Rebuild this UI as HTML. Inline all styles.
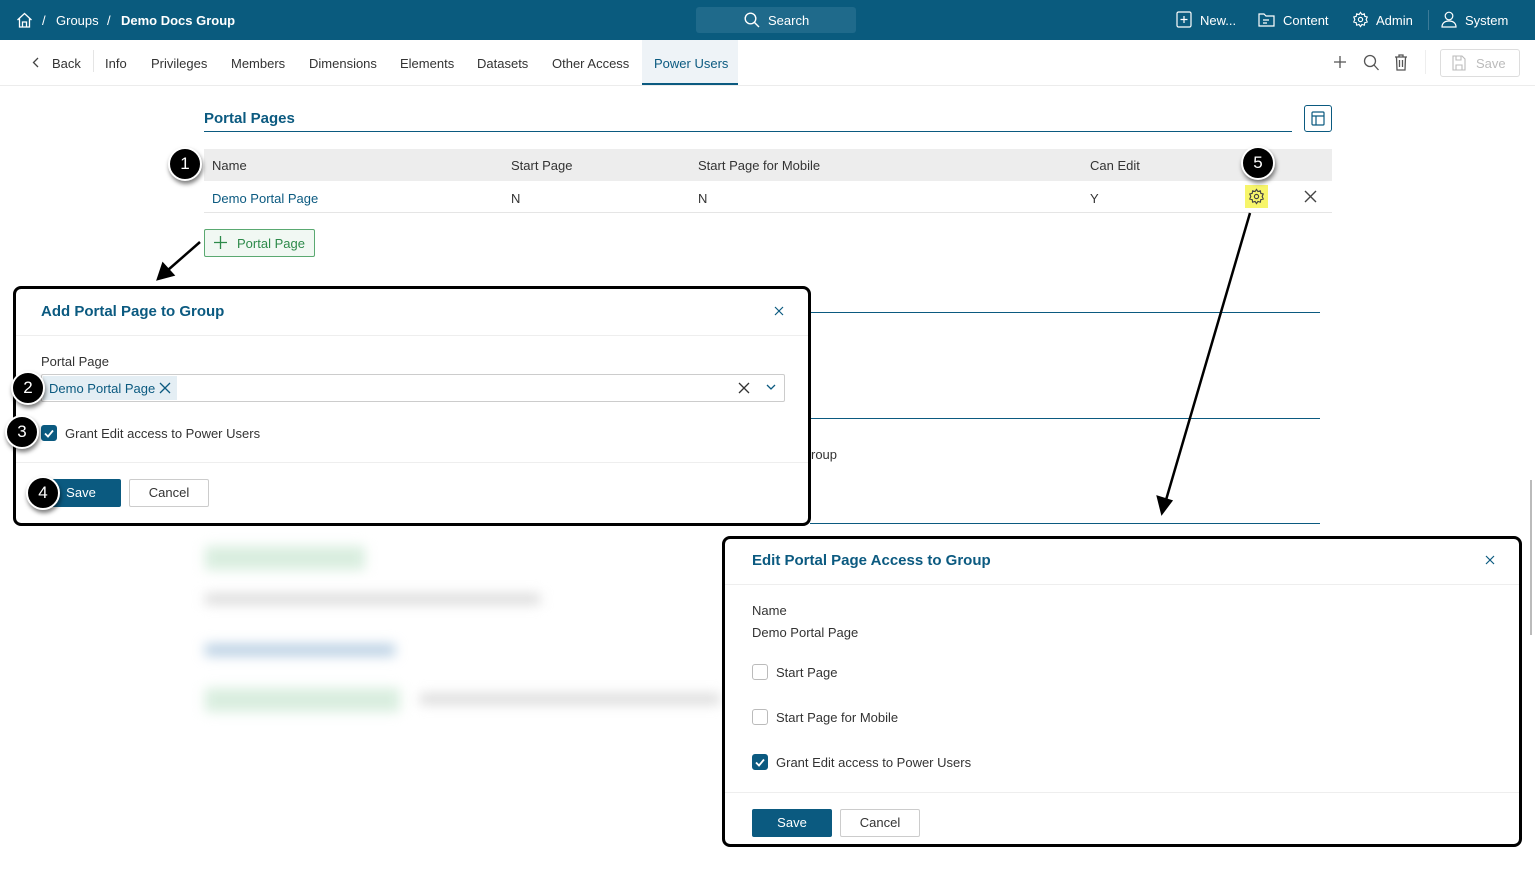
<!DOCTYPE html>
<html><head><meta charset="utf-8"><style>
*{box-sizing:border-box;margin:0;padding:0}
body{width:1535px;height:883px;position:relative;overflow:hidden;background:#fff;font-family:"Liberation Sans",sans-serif;font-size:13px;color:#333}
.a{position:absolute;white-space:nowrap}
.top{left:0;top:0;width:1535px;height:40px;background:#0a5b7e;color:#fff}
.blue{color:#0b5a80}
.badge{position:absolute;width:34px;height:34px;border-radius:50%;background:#000;border:2px solid #fff;box-shadow:1px 3px 4px rgba(0,0,0,.5);color:#fff;font-size:17px;text-align:center;line-height:30px}
.dlg{position:absolute;background:#fff;border:3px solid #000;border-radius:8px}
.cb{position:absolute;width:16px;height:16px;border:1px solid #bbb;border-radius:3px;background:#fff}
.cb.on{background:#0b5a80;border-color:#0b5a80}
.btn{position:absolute;height:28px;border-radius:2px;text-align:center;line-height:28px;font-size:13px}
.save{background:#0b5a80;color:#fff}
.cancel{background:#fff;border:1px solid #ccc;color:#333;line-height:26px}
.blur{position:absolute;filter:blur(6px)}
</style></head><body>
<div class="a top">
<svg class="a" style="left:16px;top:12px" width="17" height="16" viewBox="0 0 17 16" fill="none" stroke="#fff" stroke-width="1.3"><path d="M1.5 8L8.5 1.5 15.5 8M3.5 6.5V15h10V6.5M6.5 15v-5h4v5"/></svg>
<span class="a" style="left:42px;top:13px">/</span>
<span class="a" style="left:56px;top:13px">Groups</span>
<span class="a" style="left:107px;top:13px">/</span>
<span class="a" style="left:121px;top:13px;font-weight:bold">Demo Docs Group</span>
<div class="a" style="left:696px;top:7px;width:160px;height:26px;background:#1f6a8b;border-radius:3px"></div>
<svg class="a" style="left:744px;top:12px" width="16" height="16" viewBox="0 0 16 16" fill="none" stroke="#fff" stroke-width="1.4"><circle cx="6.5" cy="6.5" r="5.3"/><path d="M10.5 10.5L15 15"/></svg>
<span class="a" style="left:768px;top:13px">Search</span>
<svg class="a" style="left:1176px;top:11px" width="16" height="17" viewBox="0 0 16 17" fill="none" stroke="#fff" stroke-width="1.2"><rect x="1" y="1" width="14" height="15" rx="1.5"/><path d="M8 5v7M4.5 8.5h7"/></svg>
<span class="a" style="left:1200px;top:13px">New...</span>
<svg class="a" style="left:1258px;top:11px" width="17" height="17" viewBox="0 0 17 17" fill="none" stroke="#fff" stroke-width="1.2"><path d="M1 3h5l2 2h8v10H1z"/><path d="M5 9h6M5 12h4"/></svg>
<span class="a" style="left:1283px;top:13px">Content</span>
<svg class="a" style="left:1352px;top:11px" width="17" height="17" viewBox="0 0 24 24" fill="none" stroke="#fff" stroke-width="1.6"><circle cx="12" cy="12" r="3"/><path d="M12 2l2 3 3.5-1 .5 3.5 3.5 1-1.5 3.5 1.5 3.5-3.5 1-.5 3.5-3.5-1-2 3-2-3-3.5 1-.5-3.5-3.5-1L4 12 2.5 8.5 6 7.5 6.5 4 10 5z"/></svg>
<span class="a" style="left:1376px;top:13px">Admin</span>
<div class="a" style="left:1428px;top:10px;width:1px;height:20px;background:#3c7b98"></div>
<svg class="a" style="left:1441px;top:11px" width="16" height="17" viewBox="0 0 16 17" fill="none" stroke="#fff" stroke-width="1.2"><circle cx="8" cy="5" r="3.8"/><path d="M1 16c0-4 3-6 7-6s7 2 7 6z"/></svg>
<span class="a" style="left:1465px;top:13px">System</span>
</div>
<div class="a" style="left:0;top:85px;width:1535px;height:1px;background:#ececec"></div>
<div class="a" style="left:642px;top:40px;width:96px;height:45px;background:#eef3f7;border-bottom:2px solid #0b5a80"></div>
<svg class="a" style="left:32px;top:57px" width="7" height="11" fill="none" stroke="#444" stroke-width="1.3"><path d="M6 1L1.5 5.5 6 10"/></svg>
<span class="a" style="left:52px;top:56px">Back</span>
<div class="a" style="left:93px;top:50px;width:1px;height:22px;background:#e5e5e5"></div>
<span class="a" style="left:105px;top:56px">Info</span>
<span class="a" style="left:151px;top:56px">Privileges</span>
<span class="a" style="left:231px;top:56px">Members</span>
<span class="a" style="left:309px;top:56px">Dimensions</span>
<span class="a" style="left:400px;top:56px">Elements</span>
<span class="a" style="left:477px;top:56px">Datasets</span>
<span class="a" style="left:552px;top:56px">Other Access</span>
<span class="a blue" style="left:654px;top:56px">Power Users</span>
<svg class="a" style="left:1333px;top:55px" width="14" height="14" stroke="#555" stroke-width="1.3"><path d="M7 1v12M1 7h12"/></svg>
<svg class="a" style="left:1363px;top:54px" width="16" height="17" fill="none" stroke="#555" stroke-width="1.3"><circle cx="7" cy="7" r="5.5"/><path d="M11 11l4.5 5"/></svg>
<svg class="a" style="left:1394px;top:54px" width="14" height="17" fill="none" stroke="#555" stroke-width="1.3"><path d="M1 3h12M5 3V1h4v2M2.5 3l.5 13h8l.5-13M5.5 6v7M8.5 6v7"/></svg>
<div class="a" style="left:1425px;top:50px;width:1px;height:24px;background:#eee"></div>
<div class="a" style="left:1440px;top:49px;width:80px;height:28px;border:1px solid #ddd;border-radius:3px"></div>
<svg class="a" style="left:1452px;top:55px" width="14" height="16" fill="none" stroke="#bbb" stroke-width="1.1"><path d="M1 1h9l3 3v11H1z M4 1v4h5V1M4 15v-5h6v5"/></svg>
<span class="a" style="left:1476px;top:56px;color:#bbb">Save</span>
<span class="a blue" style="left:204px;top:110px;font-size:15px;font-weight:bold">Portal Pages</span>
<div class="a" style="left:204px;top:131px;width:1088px;height:1px;background:#0b5a80"></div>
<div class="a" style="left:1304px;top:105px;width:28px;height:27px;border:1px solid #0b5a80;border-radius:3px"></div>
<svg class="a" style="left:1311px;top:111px" width="14" height="15" fill="none" stroke="#0b5a80" stroke-width="1.2"><rect x="1" y="1" width="12" height="13" rx="1"/><path d="M1 5h12M5 5v9"/></svg>
<div class="a" style="left:204px;top:149px;width:1128px;height:32px;background:#ededed"></div>
<span class="a" style="left:212px;top:158px">Name</span>
<span class="a" style="left:511px;top:158px">Start Page</span>
<span class="a" style="left:698px;top:158px">Start Page for Mobile</span>
<span class="a" style="left:1090px;top:158px">Can Edit</span>
<div class="a" style="left:204px;top:212px;width:1128px;height:1px;background:#e5e5e5"></div>
<span class="a blue" style="left:212px;top:191px">Demo Portal Page</span>
<span class="a" style="left:511px;top:191px">N</span>
<span class="a" style="left:698px;top:191px">N</span>
<span class="a" style="left:1090px;top:191px">Y</span>
<div class="a" style="left:1245px;top:185px;width:23px;height:23px;background:#f7f56a"></div>
<svg class="a" style="left:1248px;top:188px" width="17" height="17" viewBox="0 0 24 24" fill="none" stroke="#444" stroke-width="1.6"><circle cx="12" cy="12" r="3"/><path d="M12 2l2 3 3.5-1 .5 3.5 3.5 1-1.5 3.5 1.5 3.5-3.5 1-.5 3.5-3.5-1-2 3-2-3-3.5 1-.5-3.5-3.5-1L4 12 2.5 8.5 6 7.5 6.5 4 10 5z"/></svg>
<svg class="a" style="left:1304px;top:190px" width="13" height="13" stroke="#444" stroke-width="1.4"><path d="M1 1l11 11M12 1L1 12"/></svg>
<div class="a" style="left:204px;top:229px;width:111px;height:28px;border:1px solid #5aa971;background:#f1f8f3;border-radius:2px"></div>
<svg class="a" style="left:214px;top:236px" width="13" height="13" stroke="#2d8a4a" stroke-width="1.3"><path d="M6.5 0v13M0 6.5h13"/></svg>
<span class="a" style="left:237px;top:236px;color:#2d8a4a">Portal Page</span>
<div class="a" style="left:810px;top:312px;width:510px;height:1px;background:#0b5a80"></div>
<div class="a" style="left:810px;top:418px;width:510px;height:1px;background:#0b5a80"></div>
<div class="a" style="left:810px;top:523px;width:510px;height:1px;background:#0b5a80"></div>
<span class="a" style="left:811px;top:447px">roup</span>
<div class="blur" style="left:205px;top:546px;width:160px;height:24px;background:#d9eedf"></div>
<div class="blur" style="left:205px;top:594px;width:335px;height:10px;background:#d8d8d8"></div>
<div class="blur" style="left:205px;top:644px;width:190px;height:12px;background:#b8cfe3"></div>
<div class="blur" style="left:205px;top:688px;width:195px;height:24px;background:#d9eedf"></div>
<div class="blur" style="left:420px;top:694px;width:300px;height:10px;background:#d8d8d8"></div>
<div class="a" style="left:1530px;top:480px;width:2px;height:155px;background:#bbb"></div>
<svg class="a" style="left:0;top:0" width="1535" height="883" fill="none" stroke="#000" stroke-width="2.5">
<path d="M200 242L168 270"/><path d="M158 279l5-15 10 11z" fill="#000"/>
<path d="M1250 213L1166 500"/><path d="M1162 513l-4-16 13 4z" fill="#000"/>
</svg>
<div class="dlg" style="left:13px;top:286px;width:798px;height:240px"></div>
<span class="a blue" style="left:41px;top:303px;font-size:15px;font-weight:bold">Add Portal Page to Group</span>
<svg class="a" style="left:774px;top:306px" width="10" height="10" stroke="#0b5a80" stroke-width="1.2"><path d="M1 1l8 8M9 1L1 9"/></svg>
<div class="a" style="left:16px;top:335px;width:792px;height:1px;background:#eee"></div>
<span class="a" style="left:41px;top:354px">Portal Page</span>
<div class="a" style="left:41px;top:374px;width:744px;height:28px;border:1px solid #ccc;border-radius:2px"></div>
<div class="a" style="left:43px;top:376px;width:134px;height:24px;background:#e4eef4"></div>
<span class="a blue" style="left:49px;top:381px">Demo Portal Page</span>
<svg class="a" style="left:159px;top:382px" width="12" height="12" stroke="#0b5a80" stroke-width="1.3"><path d="M1 1l10 10M11 1L1 11"/></svg>
<svg class="a" style="left:738px;top:382px" width="12" height="12" stroke="#333" stroke-width="1.3"><path d="M1 1l10 10M11 1L1 11"/></svg>
<svg class="a" style="left:766px;top:384px" width="10" height="7" fill="none" stroke="#0b5a80" stroke-width="1.3"><path d="M1 1l4 4 4-4"/></svg>
<div class="cb on" style="left:41px;top:425px"></div>
<svg class="a" style="left:44px;top:429px" width="10" height="9" fill="none" stroke="#fff" stroke-width="1.8"><path d="M1 4.5l3 3 5-6"/></svg>
<span class="a" style="left:65px;top:426px">Grant Edit access to Power Users</span>
<div class="a" style="left:16px;top:462px;width:792px;height:1px;background:#eee"></div>
<div class="btn save" style="left:41px;top:479px;width:80px">Save</div>
<div class="btn cancel" style="left:129px;top:479px;width:80px">Cancel</div>
<div class="dlg" style="left:722px;top:536px;width:800px;height:311px"></div>
<span class="a blue" style="left:752px;top:552px;font-size:15px;font-weight:bold">Edit Portal Page Access to Group</span>
<svg class="a" style="left:1485px;top:555px" width="10" height="10" stroke="#0b5a80" stroke-width="1.2"><path d="M1 1l8 8M9 1L1 9"/></svg>
<div class="a" style="left:725px;top:584px;width:794px;height:1px;background:#eee"></div>
<span class="a" style="left:752px;top:603px">Name</span>
<span class="a" style="left:752px;top:625px">Demo Portal Page</span>
<div class="cb" style="left:752px;top:664px"></div>
<span class="a" style="left:776px;top:665px">Start Page</span>
<div class="cb" style="left:752px;top:709px"></div>
<span class="a" style="left:776px;top:710px">Start Page for Mobile</span>
<div class="cb on" style="left:752px;top:754px"></div>
<svg class="a" style="left:755px;top:758px" width="10" height="9" fill="none" stroke="#fff" stroke-width="1.8"><path d="M1 4.5l3 3 5-6"/></svg>
<span class="a" style="left:776px;top:755px">Grant Edit access to Power Users</span>
<div class="a" style="left:725px;top:792px;width:794px;height:1px;background:#eee"></div>
<div class="btn save" style="left:752px;top:809px;width:80px">Save</div>
<div class="btn cancel" style="left:840px;top:809px;width:80px">Cancel</div>
<div class="badge" style="left:168px;top:147px">1</div>
<div class="badge" style="left:1241px;top:146px">5</div>
<div class="badge" style="left:11px;top:371px">2</div>
<div class="badge" style="left:5px;top:415px">3</div>
<div class="badge" style="left:26px;top:476px">4</div>
</body></html>
